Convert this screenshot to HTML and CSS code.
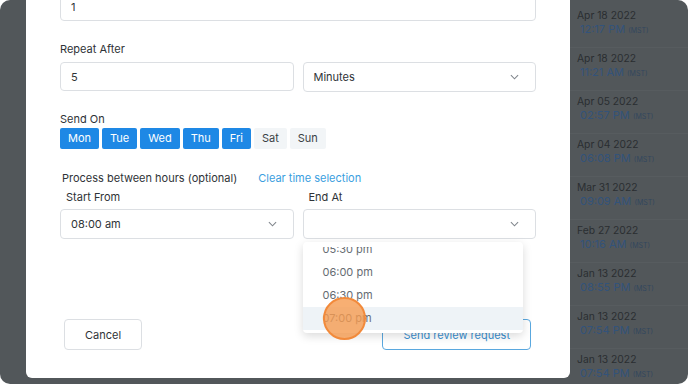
FILE: index.html
```html
<!DOCTYPE html>
<html>
<head>
  <meta charset="UTF-8">
  <title>Review Request Schedule</title>
  <link rel="stylesheet" href="styles.css">
</head>
<body>
  <div class="frame">
    <div class="backdrop-left"></div>

    <div class="modal">
      <div class="field first">
        <input class="input" type="text" value="1">
      </div>

      <div class="field">
        <label class="label">Repeat After</label>
        <div class="row">
          <input class="input" type="text" value="5">
          <div class="select">
            <span>Minutes</span>
            <svg class="chevron" viewBox="0 0 10 6"><path d="M1 1l4 4 4-4"/></svg>
          </div>
        </div>
      </div>

      <div class="field">
        <label class="label tight">Send On</label>
        <div class="days">
          <span class="day active">Mon</span>
          <span class="day active">Tue</span>
          <span class="day active">Wed</span>
          <span class="day active">Thu</span>
          <span class="day active">Fri</span>
          <span class="day">Sat</span>
          <span class="day">Sun</span>
        </div>
      </div>

      <div class="hours-head">
        <span>Process between hours (optional)</span>
        <a class="link">Clear time selection</a>
      </div>

      <div class="row">
        <div class="col">
          <label class="label sub">Start From</label>
          <div class="select">
            <span>08:00 am</span>
            <svg class="chevron" viewBox="0 0 10 6"><path d="M1 1l4 4 4-4"/></svg>
          </div>
        </div>
        <div class="col end-col">
          <label class="label sub">End At</label>
          <div class="select">
            <span></span>
            <svg class="chevron" viewBox="0 0 10 6"><path d="M1 1l4 4 4-4"/></svg>
          </div>
          <div class="dropdown">
            <div class="scroller">
              <div class="option">05:30 pm</div>
              <div class="option">06:00 pm</div>
              <div class="option">06:30 pm</div>
              <div class="option hover">07:00 pm</div>
            </div>
          </div>
          <div class="cursor"></div>
        </div>
      </div>

      <div class="actions">
        <button class="btn">Cancel</button>
        <button class="btn btn-primary">Send review request</button>
      </div>
    </div>

    <div class="history">
      <div class="entry"><div class="date">Apr 18 2022</div><div class="time">12:17 PM <small>(MST)</small></div></div>
      <div class="entry"><div class="date">Apr 18 2022</div><div class="time">11:21 AM <small>(MST)</small></div></div>
      <div class="entry"><div class="date">Apr 05 2022</div><div class="time">02:57 PM <small>(MST)</small></div></div>
      <div class="entry"><div class="date">Apr 04 2022</div><div class="time">06:08 PM <small>(MST)</small></div></div>
      <div class="entry"><div class="date">Mar 31 2022</div><div class="time">09:09 AM <small>(MST)</small></div></div>
      <div class="entry"><div class="date">Feb 27 2022</div><div class="time">10:16 AM <small>(MST)</small></div></div>
      <div class="entry"><div class="date">Jan 13 2022</div><div class="time">08:55 PM <small>(MST)</small></div></div>
      <div class="entry"><div class="date">Jan 13 2022</div><div class="time">07:54 PM <small>(MST)</small></div></div>
      <div class="entry"><div class="date">Jan 13 2022</div><div class="time">07:54 PM <small>(MST)</small></div></div>
    </div>
  </div>
</body>
</html>
```

FILE: styles.css
```css
:root {
  --overlay: #52575a;
  --blue: #1e88e5;
  --border: #dcdfe3;
  --text: #2f3337;
  --muted: #6b7177;
}

body {
  margin: 0;
  background: #ffffff;
  font-family: Inter, "Noto Sans", sans-serif;
  color: var(--text);
  overflow: hidden;
}

.frame {
  width: 688px;
  height: 384px;
  display: flex;
  background: var(--overlay);
  border-radius: 10px;
  overflow: hidden;
}

.backdrop-left {
  width: 26px;
  flex-shrink: 0;
}

.modal {
  width: 544px;
  height: 386px;
  margin-top: -8px;
  box-sizing: border-box;
  flex-shrink: 0;
  background: #fff;
  border-radius: 0 0 6px 6px;
  padding: 0 34px;
  display: flex;
  flex-direction: column;
}

.field {
  margin-bottom: 20px;
}

.field.first {
  margin-bottom: 21px;
}

.field.first .input {
  width: 100%;
}

.label {
  display: block;
  font-size: 11px;
  line-height: 14px;
  margin-bottom: 6px;
  color: var(--text);
}

.label.tight {
  margin-bottom: 2px;
}

.label.sub {
  padding-left: 6px;
  margin-bottom: 5px;
}

.row {
  display: flex;
  gap: 9px;
}

.col {
  flex: 1;
}

.end-col {
  position: relative;
}

.input,
.select {
  flex: 1;
  height: 29px;
  box-sizing: border-box;
  border: 1px solid var(--border);
  border-radius: 4px;
  padding: 0 10px;
  font: 11px Inter, sans-serif;
  color: var(--text);
  background: #fff;
  outline: none;
}

.select {
  display: flex;
  align-items: center;
  justify-content: space-between;
  height: 30px;
}

.chevron {
  width: 9px;
  height: 6px;
  margin-right: 6px;
  fill: none;
  stroke: #80868c;
  stroke-width: 1.2;
}

.days {
  display: flex;
  gap: 3px;
}

.day {
  padding: 0 8px;
  height: 21px;
  line-height: 21px;
  font-size: 11px;
  border-radius: 2px;
  background: #f2f5f7;
  color: #3a3f44;
}

.day.active {
  background: var(--blue);
  color: #fff;
}

.hours-head {
  display: flex;
  gap: 21px;
  font-size: 11px;
  line-height: 14px;
  padding-left: 2px;
  margin-top: 2px;
  margin-bottom: 5px;
}

.link {
  color: #3a9ee0;
}

.dropdown {
  position: absolute;
  top: 52px;
  left: 0;
  width: 220px;
  height: 91px;
  box-sizing: border-box;
  padding-top: 5px;
  background: #fff;
  border-radius: 4px;
  box-shadow: 0 3px 10px rgba(0, 0, 0, 0.15);
  overflow: hidden;
  z-index: 2;
}

.scroller {
  height: 100%;
  overflow: hidden;
}

.option {
  height: 23px;
  line-height: 23px;
  padding-left: 20px;
  font-size: 11px;
  color: #666c72;
}

.option:first-child {
  margin-top: -9px;
}

.option.hover {
  background: #eef3f7;
}

.cursor {
  position: absolute;
  top: 107px;
  left: 20px;
  width: 43px;
  height: 43px;
  border-radius: 50%;
  background: rgba(245, 155, 80, 0.8);
  border: 2px solid #f28a3b;
  box-sizing: border-box;
  z-index: 3;
}

.actions {
  display: flex;
  justify-content: space-between;
  margin-top: auto;
  margin-bottom: 28px;
  padding: 0 5px 0 4px;
}

.btn {
  height: 31px;
  padding: 0 20px;
  background: #fff;
  border: 1px solid var(--border);
  border-radius: 4px;
  font: 11px Inter, sans-serif;
  color: var(--text);
}

.btn-primary {
  padding: 0 20px;
  border: 1.5px solid #5aa8df;
  color: #3a8fd0;
}

.history {
  flex: 1;
  padding-top: 5px;
}

.entry {
  height: 43px;
  box-sizing: border-box;
  padding-left: 7px;
  border-bottom: 1px solid #575c5f;
}

.date {
  font-size: 10.3px;
  line-height: 14px;
  color: #2a2e31;
  padding-top: 3px;
}

.time {
  font-size: 11px;
  line-height: 15px;
  padding-left: 3px;
  color: #33537a;
}

.time small {
  font-size: 7px;
  color: #33475e;
}
```
